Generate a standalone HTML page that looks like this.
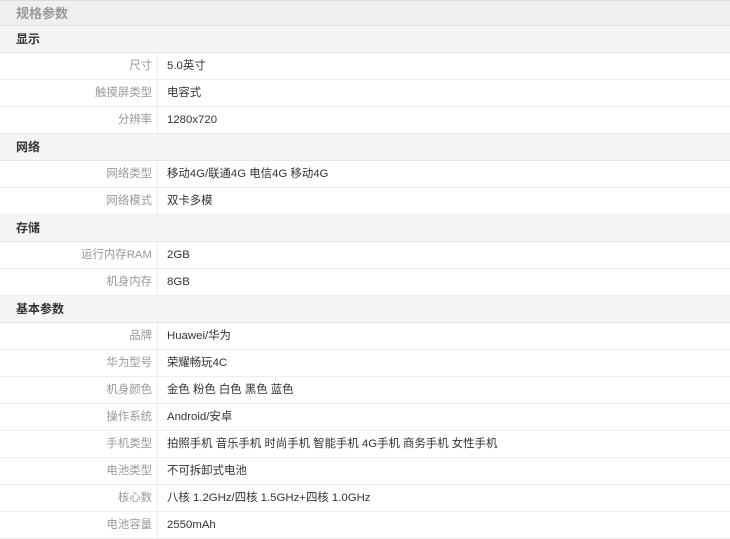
<!DOCTYPE html>
<html><head><meta charset="utf-8"><style>
*{margin:0;padding:0;box-sizing:border-box}
body{width:730px;height:537px;overflow:hidden;background:#fff;font-family:"Liberation Sans","Noto Sans CJK SC",sans-serif;font-size:11.4px;color:#333}
.t{height:26px;line-height:25px;background:#efefef;border-bottom:1px solid #e2e2e2;padding-left:16px;color:#999;font-weight:bold;font-size:13px;border-top:1px solid #ddd}
.h{height:27px;line-height:26px;background:#f5f5f5;border-bottom:1px solid #e6e6e6;padding-left:16px;font-weight:bold;color:#333;font-size:12px}
.r{height:27px;line-height:26px;border-bottom:1px solid #eee;display:flex}
.l{width:158px;text-align:right;padding-right:5px;color:#999;border-right:1px solid #eee}
.v{padding-left:9px}
</style></head><body>
<div class="t">规格参数</div>
<div class="h">显示</div>
<div class="r"><div class="l">尺寸</div><div class="v">5.0英寸</div></div>
<div class="r"><div class="l">触摸屏类型</div><div class="v">电容式</div></div>
<div class="r"><div class="l">分辨率</div><div class="v">1280x720</div></div>
<div class="h">网络</div>
<div class="r"><div class="l">网络类型</div><div class="v">移动4G/联通4G 电信4G 移动4G</div></div>
<div class="r"><div class="l">网络模式</div><div class="v">双卡多模</div></div>
<div class="h">存储</div>
<div class="r"><div class="l">运行内存RAM</div><div class="v">2GB</div></div>
<div class="r"><div class="l">机身内存</div><div class="v">8GB</div></div>
<div class="h">基本参数</div>
<div class="r"><div class="l">品牌</div><div class="v">Huawei/华为</div></div>
<div class="r"><div class="l">华为型号</div><div class="v">荣耀畅玩4C</div></div>
<div class="r"><div class="l">机身颜色</div><div class="v">金色 粉色 白色 黑色 蓝色</div></div>
<div class="r"><div class="l">操作系统</div><div class="v">Android/安卓</div></div>
<div class="r"><div class="l">手机类型</div><div class="v">拍照手机 音乐手机 时尚手机 智能手机 4G手机 商务手机 女性手机</div></div>
<div class="r"><div class="l">电池类型</div><div class="v">不可拆卸式电池</div></div>
<div class="r"><div class="l">核心数</div><div class="v">八核 1.2GHz/四核 1.5GHz+四核 1.0GHz</div></div>
<div class="r"><div class="l">电池容量</div><div class="v">2550mAh</div></div>
</body></html>
